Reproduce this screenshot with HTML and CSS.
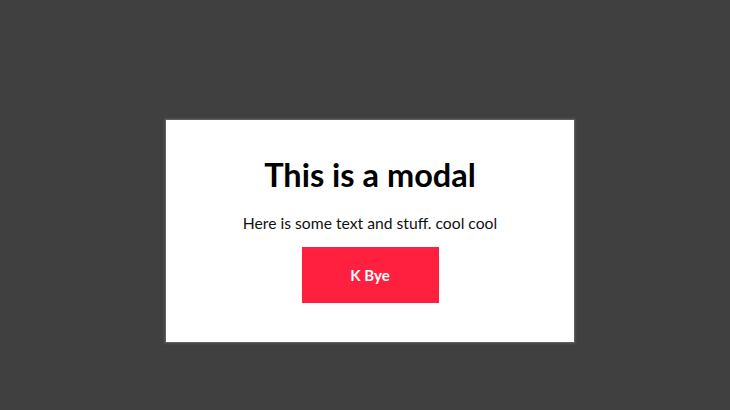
FILE: index.html
```html
<!DOCTYPE html>
<html>
<head>
<meta charset="utf-8">
<link rel="stylesheet" href="styles.css">
</head>
<body>
<div class="stage">
  <div class="modal">
    <h1 class="title">This is a modal</h1>
    <p class="text">Here is some text and stuff. cool cool</p>
    <button class="btn">K Bye</button>
  </div>
</div>
</body>
</html>
```
FILE: styles.css
```css
html, body {
  margin: 0;
  padding: 0;
  height: 100%;
}
body {
  background: #404040;
  font-family: Lato, "Open Sans", sans-serif;
}
.stage {
  padding-top: 120px;
  padding-left: 166px;
}
.modal {
  box-sizing: border-box;
  width: 408px;
  height: 222px;
  background: #fff;
  box-shadow: 0 0 0 1px #606060, 0 0 2px 2px #505050;
  display: flex;
  flex-direction: column;
  align-items: center;
  padding-top: 36px;
}
.title {
  margin: 0;
  font-size: 32.5px;
  font-weight: 700;
  color: #000;
  line-height: 38px;
}
.text {
  margin: 19px 0 0;
  font-size: 15.7px;
  color: #111;
  line-height: 20px;
}
.btn {
  margin-top: 14px;
  width: 137px;
  height: 56px;
  border: none;
  background: #ff1f3f;
  color: #fff;
  font-family: Lato, "Open Sans", sans-serif;
  font-size: 15px;
  font-weight: 700;
}
```
